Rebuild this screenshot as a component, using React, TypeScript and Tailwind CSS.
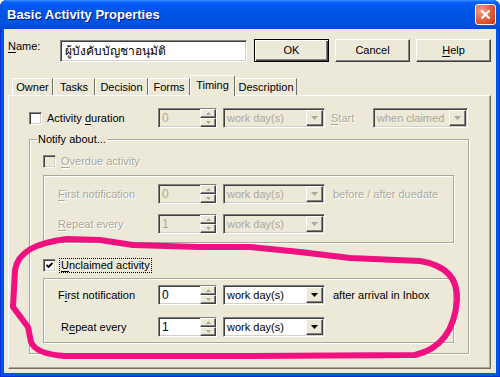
import React from 'react';

const sunken = 'border border-[#808080] border-r-white border-b-white shadow-[inset_1px_1px_0_#404040,inset_-1px_-1px_0_#d4d0c8]';
const raised = 'border border-white border-r-[#404040] border-b-[#404040] shadow-[inset_-1px_-1px_0_#808080]';
const etched = 'border border-[#aca899] shadow-[1px_1px_0_#fff,inset_1px_1px_0_#fff]';
const dim = 'text-[#aca899] [text-shadow:1px_1px_0_#fff]';

const U = ({ children }: { children: React.ReactNode }) => <span className="underline underline-offset-2">{children}</span>;

const Check = ({ checked, disabled }: { checked?: boolean; disabled?: boolean }) => (
  <span className={`w-[13px] h-[13px] shrink-0 flex items-center justify-center ${sunken} ${disabled ? 'bg-[#ece9d8]' : 'bg-white'}`}>
    {checked && (
      <svg width="7" height="7" viewBox="0 0 7 7">
        <path d="M0.5 3 L2.5 5 L6.5 1" stroke="#000" strokeWidth="1.8" fill="none" />
      </svg>
    )}
  </span>
);

const Arrow = ({ up, color }: { up?: boolean; color: string }) => (
  <svg width="5" height="3" viewBox="0 0 5 3">
    <path d={up ? 'M2.5 0 L5 3 L0 3 Z' : 'M0 0 L5 0 L2.5 3 Z'} fill={color} />
  </svg>
);

const Spin = ({ value, disabled }: { value: string; disabled?: boolean }) => (
  <div className={`w-[59px] h-[20px] flex ${sunken} ${disabled ? 'bg-[#ece9d8] text-[#aca899]' : 'bg-white text-black'}`}>
    <span className="flex-1 pl-[3px] leading-[18px] text-[12px]">{value}</span>
    <div className="w-[16px] flex flex-col bg-[#ece9d8]">
      <div className={`flex-1 flex items-center justify-center ${raised}`}><Arrow up color="#aca899" /></div>
      <div className={`flex-1 flex items-center justify-center ${raised}`}><Arrow color="#aca899" /></div>
    </div>
  </div>
);

const Combo = ({ value, disabled, width = 'w-[102px]' }: { value: string; disabled?: boolean; width?: string }) => (
  <div className={`${width} h-[20px] flex items-center pr-[1px] ${sunken} ${disabled ? 'bg-[#ece9d8] text-[#aca899]' : 'bg-white text-black'}`}>
    <span className="flex-1 pl-[3px] leading-[18px] whitespace-nowrap overflow-hidden">{value}</span>
    <div className={`w-[17px] h-[16px] flex items-center justify-center bg-[#ece9d8] ${raised}`}>
      <svg width="7" height="4" viewBox="0 0 7 4"><path d="M0 0 L7 0 L3.5 4 Z" fill={disabled ? '#aca899' : '#000'} /></svg>
    </div>
  </div>
);

const NotifyRow = ({ label, value, after, disabled }: { label: React.ReactNode; value: string; after?: string; disabled?: boolean }) => (
  <div className="flex items-center h-[20px] pl-[14px]">
    <span className={`w-[100px] whitespace-nowrap ${disabled ? dim : ''}`}>{label}</span>
    <Spin value={value} disabled={disabled} />
    <div className="ml-[6px]"><Combo value="work day(s)" disabled={disabled} /></div>
    {after && <span className={`ml-[8px] whitespace-nowrap ${disabled ? dim : ''}`}>{after}</span>}
  </div>
);

const Button = ({ children, isDefault }: { children: React.ReactNode; isDefault?: boolean }) => (
  <button className={`w-[75px] h-[23px] flex items-center justify-center bg-[#ece9d8] ${isDefault ? 'border border-black shadow-[inset_1px_1px_0_#fff,inset_-1px_-1px_0_#404040,inset_-2px_-2px_0_#808080]' : raised}`}>
    {children}
  </button>
);

const tabs = [
  { name: 'Owner', width: 'w-[41px]' },
  { name: 'Tasks', width: 'w-[42px]' },
  { name: 'Decision', width: 'w-[53px]' },
  { name: 'Forms', width: 'w-[42px]' },
  { name: 'Timing', width: 'w-[45px]' },
  { name: 'Description', width: 'w-[62px]' },
];

export default function App() {
  return (
    <div className="w-[500px] h-[377px] relative overflow-hidden bg-white font-['Liberation_Sans',sans-serif] text-[11px] leading-[13px] text-black">
      <div className="h-full flex flex-col rounded-t-[7px] bg-[#0054e3] shadow-[inset_0_0_0_1px_#0831d9]">
        {/* title bar */}
        <div className="h-[29px] shrink-0 flex items-center pl-[7px] pr-[4px] rounded-t-[7px] bg-[linear-gradient(#3d95ff_0px,#0a61ff_2px,#0058ee_6px,#0054e3_15px,#0053e1_24px,#0047d4_29px)]">
          <span className="flex-1 text-white font-bold text-[13px] [text-shadow:1px_1px_0_#0a1883]">Basic Activity Properties</span>
          <div className="w-[21px] h-[21px] rounded-[3px] border border-white flex items-center justify-center bg-[radial-gradient(circle_at_30%_30%,#f0a08a,#e25a36_55%,#c3350f)]">
            <svg width="11" height="11" viewBox="0 0 11 11">
              <path d="M1.5 1.5 L9.5 9.5 M9.5 1.5 L1.5 9.5" stroke="#fff" strokeWidth="2.2" />
            </svg>
          </div>
        </div>
        {/* client area */}
        <div className="flex-1 flex flex-col mx-[4px] mb-[4px] bg-[#ece9d8]">
          <div className="flex items-start mt-[10px] pl-[4px]">
            <span className="w-[52px] mt-[1px]"><U>N</U>ame:</span>
            <div className={`w-[187px] h-[22px] mt-[1px] bg-white flex items-center pl-[4px] text-[12px] font-['Liberation_Sans','Noto_Sans',sans-serif] ${sunken}`}>
              ผู้บังคับบัญชาอนุมัติ
            </div>
            <div className="flex gap-[6px] ml-[7px]">
              <Button isDefault>OK</Button>
              <Button>Cancel</Button>
              <Button><U>H</U>elp</Button>
            </div>
          </div>
          {/* tabs */}
          <div className="flex items-end h-[20px] mt-[13px] pl-[8px] relative z-10">
            {tabs.map((t) =>
              t.name === 'Timing' ? (
                <div key={t.name} className={`${t.width} h-[21px] -mb-[1px] flex justify-center pt-[3px] bg-[#ece9d8] border-l border-t border-white border-r border-r-[#716f64] rounded-t-[2px]`}>
                  {t.name}
                </div>
              ) : (
                <div key={t.name} className={`${t.width} h-[17px] flex items-center justify-center bg-[#ece9d8] border-l border-t border-white border-r border-r-[#716f64]`}>
                  {t.name}
                </div>
              )
            )}
          </div>
          {/* tab panel */}
          <div className="flex-1 ml-[4px] mr-[5px] mb-[4px] border border-white border-r-[#716f64] border-b-[#716f64] shadow-[inset_-1px_-1px_0_#aca899] pl-[20px] pt-[12px]">
            <div className="flex items-center h-[20px]">
              <div className="w-[129px] flex items-center">
                <Check />
                <span className="ml-[5px]">Activity <U>d</U>uration</span>
              </div>
              <Spin value="0" disabled />
              <div className="ml-[6px]"><Combo value="work day(s)" disabled /></div>
              <span className={`ml-[6px] w-[42px] ${dim}`}><U>S</U>tart</span>
              <Combo value="when claimed" disabled width="w-[95px]" />
            </div>

            <div className={`w-[440px] mt-[11px] pb-[10px] ${etched}`}>
              <div className="-mt-[7px] ml-[7px] w-fit px-[1px] bg-[#ece9d8]">Notify about...</div>

              <div className="flex items-center h-[13px] mt-[9px] pl-[13px]">
                <Check disabled />
                <span className={`ml-[5px] ${dim}`}><U>O</U>verdue activity</span>
              </div>
              <div className={`ml-[13px] w-[411px] mt-[7px] pt-[8px] pb-[8px] flex flex-col gap-[10px] ${etched}`}>
                <NotifyRow disabled label={<><U>F</U>irst notification</>} value="0" after="before / after duedate" />
                <NotifyRow disabled label={<><U>R</U>epeat every</>} value="1" />
              </div>

              <div className="flex items-center h-[13px] mt-[16px] pl-[13px]">
                <Check checked />
                <span className="ml-[4px] px-[1px] outline outline-1 outline-dotted outline-black"><U>U</U>nclaimed activity</span>
              </div>
              <div className={`ml-[13px] w-[411px] mt-[6px] pt-[6px] pb-[5px] flex flex-col gap-[12px] ${etched}`}>
                <NotifyRow label={<>F<U>i</U>rst notification</>} value="0" after="after arrival in Inbox" />
                <NotifyRow label={<>&nbsp;R<U>e</U>peat every</>} value="1" />
              </div>
            </div>
          </div>
        </div>
      </div>
      {/* hand-drawn highlight */}
      <svg className="absolute inset-0 pointer-events-none" width="500" height="377" viewBox="0 0 500 377">
        <path
          d="M250 247 L200 247 L133 245 L100 240 L67 239 C35 243 18 252 15 270 L13 307 L28 327 L31 342 C35 352 50 355 65 356 L250 356 L415 355 C445 348 455 325 457 300 C458 278 445 265 420 261 L350 258 L300 252 Z"
          fill="none"
          stroke="#f0107f"
          strokeWidth="6"
          strokeLinejoin="round"
        />
      </svg>
    </div>
  );
}
